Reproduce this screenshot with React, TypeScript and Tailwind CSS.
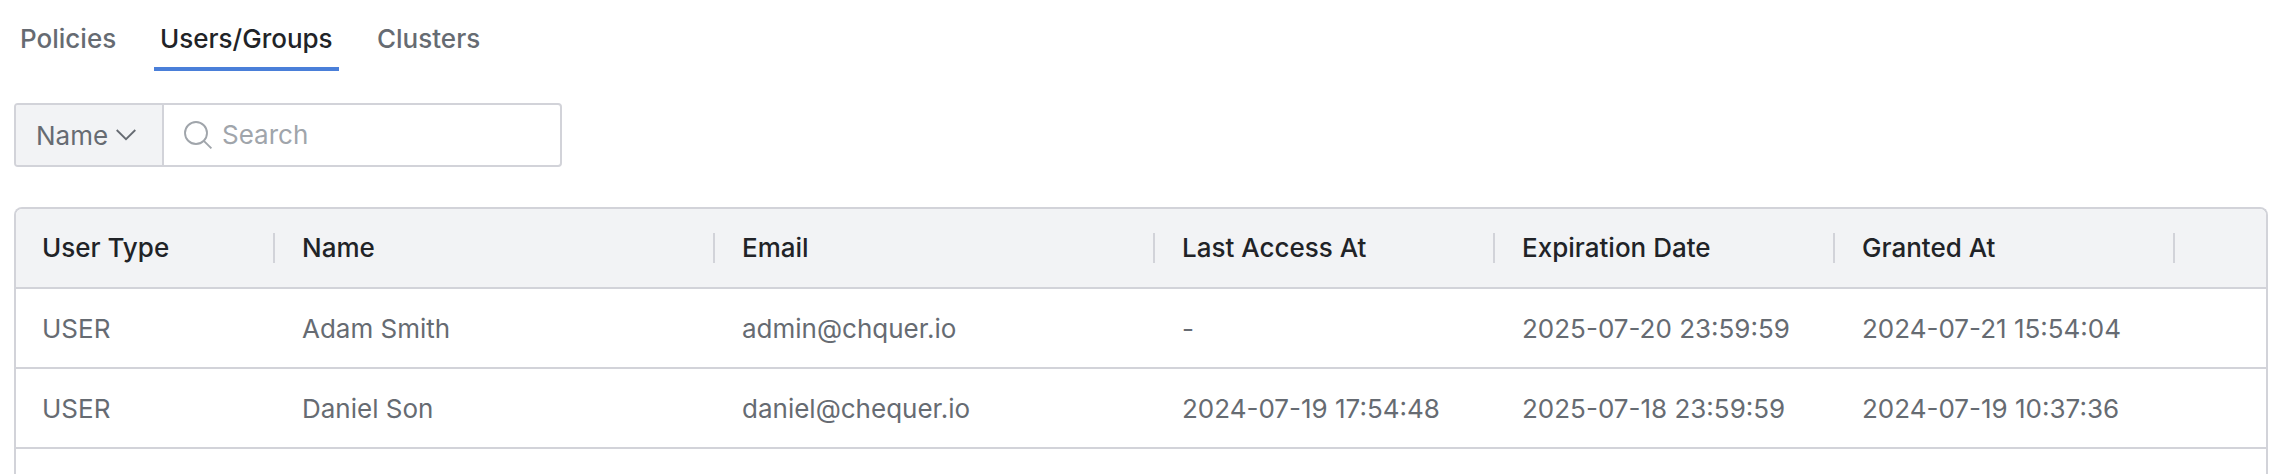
const cols = ['User Type', 'Name', 'Email', 'Last Access At', 'Expiration Date', 'Granted At'];
const widths = ['w-[260px]', 'w-[440px]', 'w-[440px]', 'w-[340px]', 'w-[340px]', 'w-[340px]'];
const rows = [
  ['USER', 'Adam Smith', 'admin@chquer.io', '-', '2025-07-20 23:59:59', '2024-07-21 15:54:04'],
  ['USER', 'Daniel Son', 'daniel@chequer.io', '2024-07-19 17:54:48', '2025-07-18 23:59:59', '2024-07-19 10:37:36'],
];

export default function App() {
  return (
    <div className="h-[474px] overflow-hidden bg-white pl-[14px] pr-[20px] font-['Inter',sans-serif] text-[26px] text-[#666b72]">
      <nav className="flex h-[71px] font-medium">
        <div className="w-[108px] pl-[6px] pt-[19px] leading-[40px]">Policies</div>
        <div className="ml-[32px] w-[185px] border-b-4 border-[#4a7fd9] pl-[6px] pt-[19px] leading-[40px] text-[#212327]">Users/Groups</div>
        <div className="ml-[38px] pt-[19px] leading-[40px]">Clusters</div>
      </nav>
      <div className="mt-[32px] flex h-[64px] w-[548px] overflow-hidden rounded border-2 border-[#d2d3d9]">
        <div className="flex w-[148px] items-center border-r-2 border-[#d2d3d9] bg-[#f2f3f5] pl-[20px]">
          Name
          <svg className="ml-[8px]" width="20" height="12" viewBox="0 0 20 12" fill="none" stroke="#666b72" strokeWidth="1.8"><path d="M.7 1l9.3 9.2L19.3 1" /></svg>
        </div>
        <div className="flex items-center pl-[20px] text-[#a0a5ab]">
          <svg width="30" height="30" viewBox="0 0 30 30" fill="none" stroke="#a0a5ab" strokeWidth="1.9"><circle cx="12" cy="13" r="11" /><path d="M19.8 20.8l7.6 7.6" /></svg>
          <span className="ml-[8px] pb-[2px]">Search</span>
        </div>
      </div>
      <div className="mt-[40px] h-[300px] overflow-hidden rounded-t-lg border-2 border-b-0 border-[#d2d3d9]">
        <div className="flex h-[80px] items-center border-b-2 border-[#d2d3d9] bg-[#f2f3f5] font-medium text-[#212327]">
          {cols.map((c, i) => (
            <div key={c} className={`${widths[i]} pr-px`}>
              <div className="flex h-[30px] items-center border-r-2 border-[#d2d3d9] pb-[2px] pl-[26px]">{c}</div>
            </div>
          ))}
        </div>
        {rows.map((r) => (
          <div key={r[1]} className="flex h-[80px] items-center border-b-2 border-[#d2d3d9]">
            {r.map((c, i) => (
              <div key={i} className={`${widths[i]} pl-[26px]`}>{c}</div>
            ))}
          </div>
        ))}
      </div>
    </div>
  );
}
